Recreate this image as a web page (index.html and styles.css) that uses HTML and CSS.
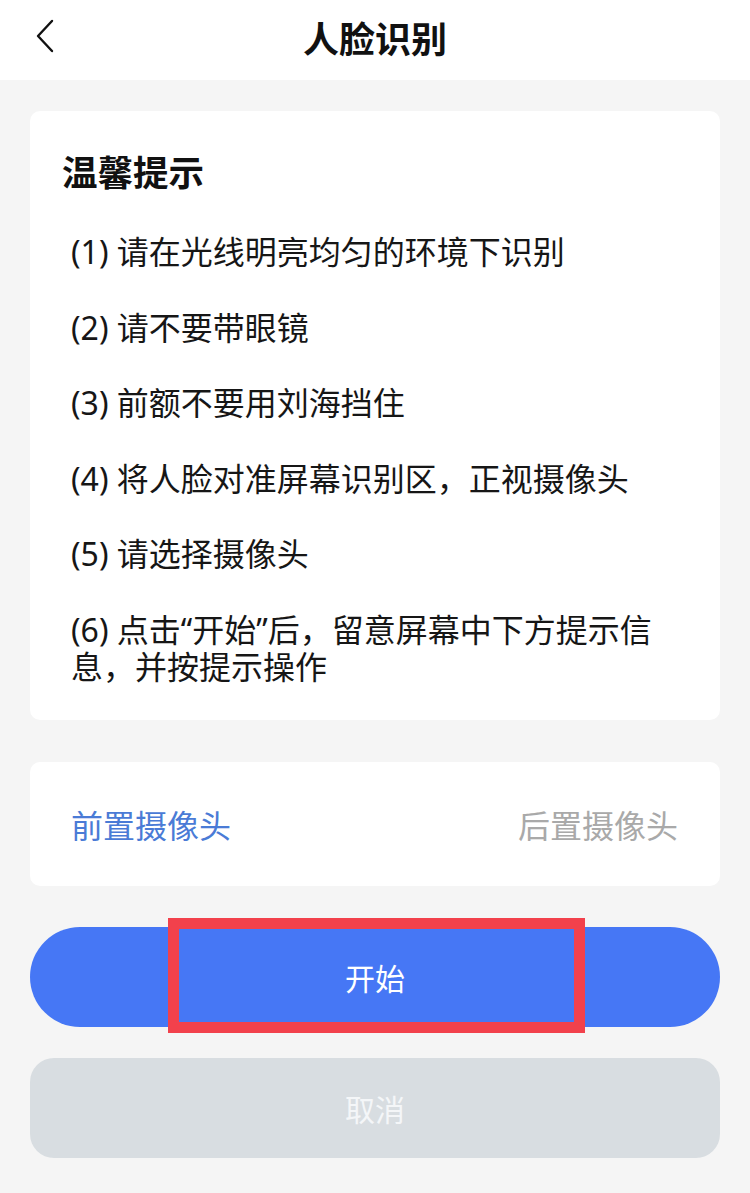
FILE: index.html
```html
<!DOCTYPE html>
<html lang="zh">
<head>
<meta charset="utf-8">
<link rel="stylesheet" href="styles.css">
</head>
<body>
<header class="nav">
  <svg class="back" width="20" height="34" viewBox="0 0 20 34"><path d="M17 2 L3 17 L17 32" fill="none" stroke="#111" stroke-width="2.4" stroke-linecap="round" stroke-linejoin="round"/></svg>
  <h1 class="nav-title">人脸识别</h1>
</header>
<main class="content">
  <section class="card tips">
    <h2 class="tips-title">温馨提示</h2>
    <ol class="tips-list">
      <li>(1) 请在光线明亮均匀的环境下识别</li>
      <li>(2) 请不要带眼镜</li>
      <li>(3) 前额不要用刘海挡住</li>
      <li>(4) 将人脸对准屏幕识别区，正视摄像头</li>
      <li>(5) 请选择摄像头</li>
      <li>(6) 点击“开始”后，留意屏幕中下方提示信息，并按提示操作</li>
    </ol>
  </section>
  <section class="card camera">
    <span class="cam cam-active">前置摄像头</span>
    <span class="cam cam-inactive">后置摄像头</span>
  </section>
  <div class="btn-wrap">
    <button class="btn btn-start">开始</button>
    <span class="highlight"></span>
  </div>
  <button class="btn btn-cancel">取消</button>
</main>
</body>
</html>
```
FILE: styles.css
```css
* { box-sizing: border-box; }
html, body { margin: 0; padding: 0; }
body {
  width: 750px;
  height: 1193px;
  background: #f5f5f5;
  font-family: "Noto Sans CJK SC", "Noto Sans", sans-serif;
  color: #111;
  overflow: hidden;
}
.nav {
  height: 80px;
  background: #fff;
  display: flex;
  align-items: center;
  justify-content: center;
  position: relative;
}
.back {
  position: absolute;
  left: 35px;
  top: 19px;
}
.nav-title {
  margin: 0;
  font-size: 36px;
  font-weight: 600;
  line-height: 44px;
  margin-top: -6px;
}
.content {
  padding: 31px 30px 0;
  display: flex;
  flex-direction: column;
}
.card {
  background: #fff;
  border-radius: 10px;
}
.tips {
  padding: 36px 14px 28px 32px;
  height: 609px;
}
.tips-title {
  margin: 0;
  font-size: 35.5px;
  font-weight: 700;
  line-height: 48px;
}
.tips-list {
  list-style: none;
  margin: 38px 0 0;
  padding: 0 0 0 9px;
  font-family: "Noto Sans", "Noto Sans CJK SC", sans-serif;
  font-size: 32px;
  line-height: 37px;
  color: #161616;
}
.tips-list li { margin-bottom: 38.5px; }
.tips-list li:last-child { margin-bottom: 0; }
.camera {
  margin-top: 42px;
  height: 124px;
  display: flex;
  align-items: center;
  justify-content: space-between;
  padding: 0 42px 0 41px;
  font-size: 32px;
}
.cam-active { color: #4a7bd6; }
.cam-inactive { color: #a9a9a9; }
.btn-wrap {
  margin-top: 41px;
  position: relative;
}
.btn {
  width: 100%;
  height: 100px;
  border: none;
  font-family: inherit;
  font-size: 30px;
  color: #fff;
  display: block;
}
.btn-start {
  background: #4677f5;
  border-radius: 50px;
}
.highlight {
  position: absolute;
  left: 138px;
  top: -9px;
  width: 417px;
  height: 115px;
  border: 11px solid #f2414c;
}
.btn-cancel {
  margin-top: 31px;
  background: #d8dde1;
  border-radius: 24px;
  color: #f4f6f8;
}
```
